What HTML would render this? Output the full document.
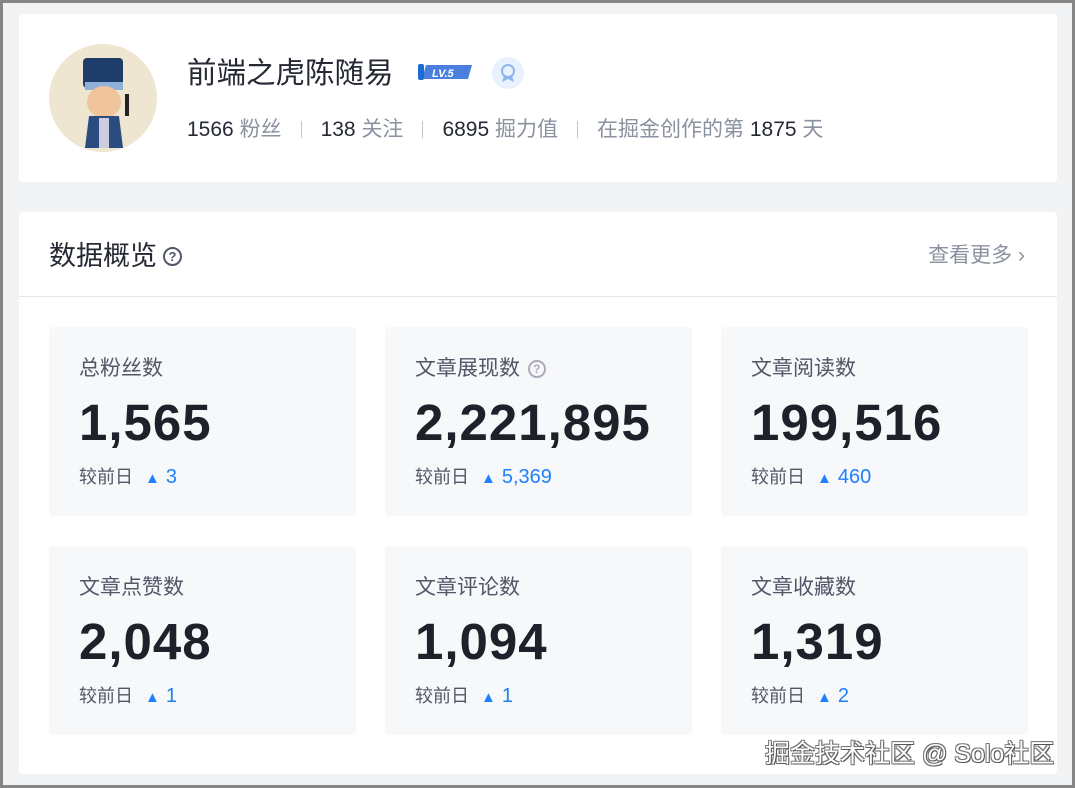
<!DOCTYPE html>
<html><head><meta charset="utf-8"><style>
*{margin:0;padding:0;box-sizing:border-box}
body{width:1075px;height:788px;background:#f2f3f5;border:3px solid #858585;font-family:"Liberation Sans","Noto Sans CJK SC",sans-serif;position:relative;overflow:hidden}
.c1{position:absolute;left:16px;top:11px;width:1038px;height:168px;background:#fff;border-radius:4px}
.av{position:absolute;left:30px;top:30px;width:108px;height:108px;border-radius:50%;background:#efe6d2;overflow:hidden}
.name{position:absolute;left:168px;top:36px;font-size:29.5px;color:#252933}
.lv{position:absolute;left:397px;top:49px;width:56px;height:18px}
.medal{position:absolute;left:473px;top:43px;width:32px;height:32px;border-radius:50%;background:#e8f1fd}
.stats{position:absolute;left:168px;top:99px;font-size:21px;color:#252933;white-space:nowrap}
.stats span.g{color:#8a919f}
.stats .sep{display:inline-block;width:1px;height:17px;background:#c2c8d1;margin:0 19px;vertical-align:-2px}
.c2{position:absolute;left:16px;top:209px;width:1038px;height:562px;background:#fff;border-radius:4px}
.h{position:absolute;left:30px;top:22px;font-size:27px;color:#252933}
.q{display:inline-block;width:19px;height:19px;border:2px solid #515767;border-radius:50%;font-size:13px;text-align:center;line-height:15px;font-weight:bold;color:#515767;vertical-align:4px;margin-left:6px}
.more{position:absolute;right:32px;top:27px;font-size:21px;color:#8a919f}
.line{position:absolute;left:0;right:0;top:84px;height:1px;background:#e4e6eb}
.s{position:absolute;width:307px;height:189px;background:#f7f8fa;border-radius:4px}
.s .t{position:absolute;left:30px;top:25px;font-size:21px;color:#515767}
.s .n{position:absolute;left:30px;top:66px;font-size:51px;font-weight:bold;color:#1d2129;letter-spacing:1px}
.s .d{position:absolute;left:30px;top:136px;font-size:18px;color:#515767}
.s .d b{font-weight:normal;font-size:20px;color:#1e80ff;margin-left:6px}
.s .d i{font-style:normal;font-size:15px;color:#1e80ff;margin-left:12px}
.wm{position:absolute;left:762px;top:731px;font-size:25px;color:#fff;text-shadow:1px 1px 0 #555,-1px -1px 0 #777,1px -1px 0 #777,-1px 1px 0 #777}
</style></head><body>
<div class="c1">
 <div class="av"><svg width="108" height="108"><rect x="34" y="14" width="40" height="30" fill="#1f3d6b" rx="4"/><rect x="36" y="38" width="38" height="8" fill="#8fb0d8"/><ellipse cx="55" cy="58" rx="17" ry="16" fill="#f1c59c"/><path d="M40 72 L70 72 L74 104 L36 104Z" fill="#2a4c80"/><rect x="50" y="74" width="10" height="30" fill="#ccd"/><rect x="76" y="50" width="4" height="22" fill="#222"/></svg></div>
 <div class="name">前端之虎陈随易</div>
 <svg class="lv" viewBox="0 0 56 18"><path d="M10 2 L56 2 L52 16 L6 16Z" fill="#4a7fe0"/><rect x="2" y="1" width="6" height="16" rx="2" fill="#1e6bd6"/><text x="16" y="14" font-size="11" font-weight="bold" font-style="italic" fill="#fff" font-family="Liberation Sans">LV.5</text></svg>
 <div class="medal"><svg width="32" height="32"><circle cx="16" cy="14" r="6" fill="none" stroke="#8cb6ee" stroke-width="2"/><path d="M12 19 L10 25 L16 22 L22 25 L20 19" fill="#8cb6ee"/></svg></div>
 <div class="stats">1566 <span class="g">粉丝</span><span class="sep"></span>138 <span class="g">关注</span><span class="sep"></span>6895 <span class="g">掘力值</span><span class="sep"></span><span class="g">在掘金创作的第 </span>1875<span class="g"> 天</span></div>
</div>
<div class="c2">
 <div class="h">数据概览<span class="q">?</span></div>
 <div class="more">查看更多 ›</div>
 <div class="line"></div>
 <div class="s" style="left:30px;top:115px"><div class="t">总粉丝数</div><div class="n">1,565</div><div class="d">较前日<i>▲</i><b>3</b></div></div>
 <div class="s" style="left:366px;top:115px"><div class="t">文章展现数 <span class="q" style="width:18px;height:18px;border-color:#aab;color:#aab;font-size:12px;line-height:14px;vertical-align:2px;margin-left:2px">?</span></div><div class="n">2,221,895</div><div class="d">较前日<i>▲</i><b>5,369</b></div></div>
 <div class="s" style="left:702px;top:115px"><div class="t">文章阅读数</div><div class="n">199,516</div><div class="d">较前日<i>▲</i><b>460</b></div></div>
 <div class="s" style="left:30px;top:334px"><div class="t">文章点赞数</div><div class="n">2,048</div><div class="d">较前日<i>▲</i><b>1</b></div></div>
 <div class="s" style="left:366px;top:334px"><div class="t">文章评论数</div><div class="n">1,094</div><div class="d">较前日<i>▲</i><b>1</b></div></div>
 <div class="s" style="left:702px;top:334px"><div class="t">文章收藏数</div><div class="n">1,319</div><div class="d">较前日<i>▲</i><b>2</b></div></div>
</div>
<div class="wm">掘金技术社区 @ Solo社区</div>
</body></html>
